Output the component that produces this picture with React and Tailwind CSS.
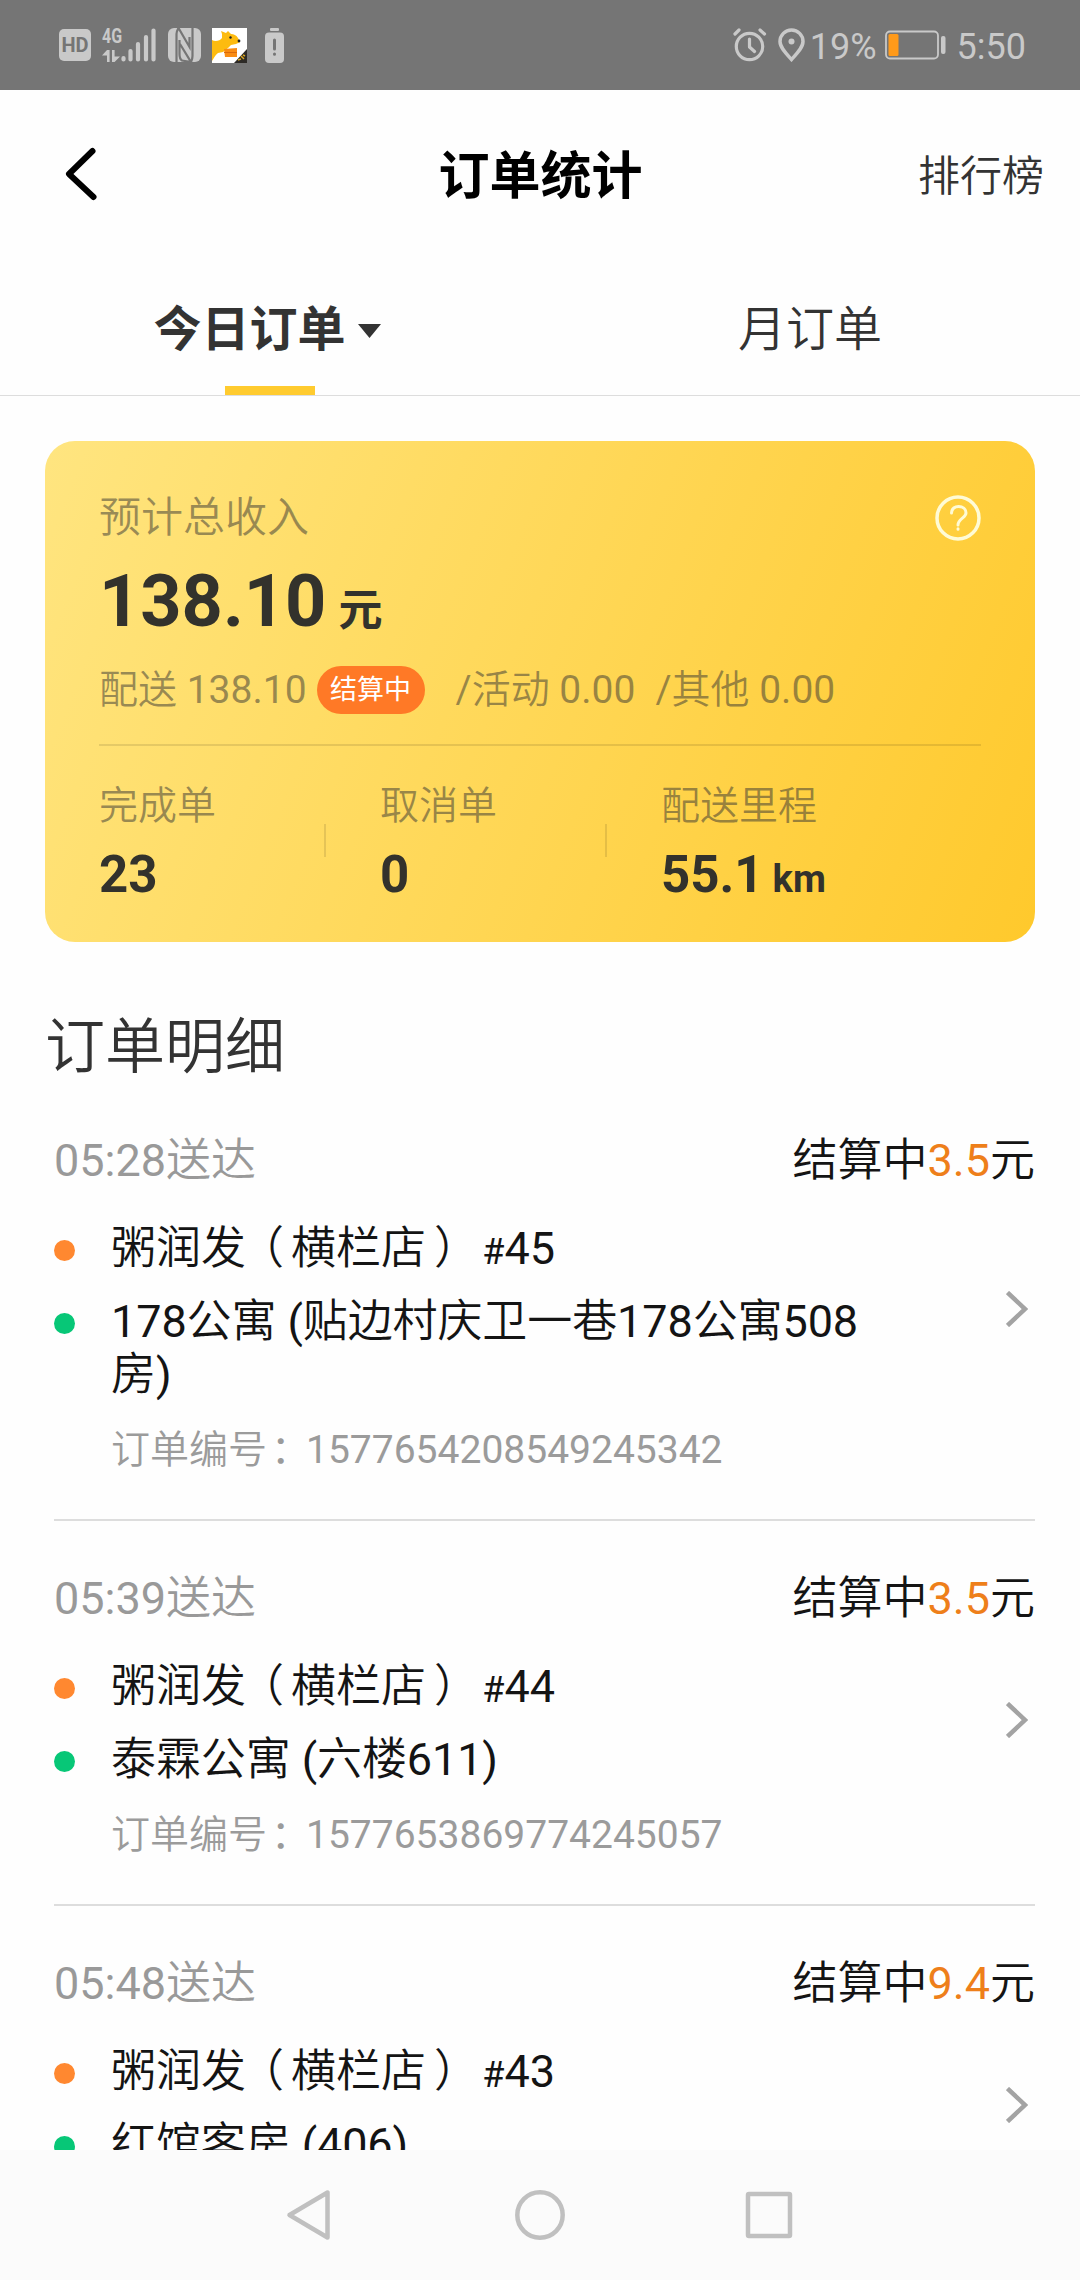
const orders = [
  {
    id: '1577654208549245342',
    time: '05:28',
    fee: '3.5',
    shop: '粥润发',
    branch: '横栏店',
    seq: 45,
    address: '178公寓 (贴边村庆卫一巷178公寓508房)',
  },
  {
    id: '1577653869774245057',
    time: '05:39',
    fee: '3.5',
    shop: '粥润发',
    branch: '横栏店',
    seq: 44,
    address: '泰霖公寓 (六楼611)',
  },
  {
    time: '05:48',
    fee: '9.4',
    shop: '粥润发',
    branch: '横栏店',
    seq: 43,
    address: '红馆客房 (406)',
  },
];

const stats = [
  { label: '完成单', value: '23' },
  { label: '取消单', value: '0' },
  { label: '配送里程', value: '55.1', unit: 'km' },
];

// Chinese runs are set a little lighter than the digits next to them
const Zh = ({ children }) =>
  children.split(/([\u4e00-\u9fff]+)/).map((part, index) =>
    index % 2 ? (
      <span key={index} className="font-[350]">
        {part}
      </span>
    ) : (
      part
    )
  );

const StatusBar = () => (
  <div className="flex h-[90px] shrink-0 items-center justify-between bg-[#757575] pr-[54px] pl-[59px] text-[#c9c9c9]">
    <div className="flex items-center">
      {/* HD */}
      <div className="flex h-8 w-8 items-center justify-center rounded-[5px] bg-[#c9c9c9] text-[20px] leading-none font-bold text-[#757575]">
        HD
      </div>
      {/* 4G + signal */}
      <div className="ml-[11px] flex h-[34px] w-[54px] items-end">
        <div className="flex h-full w-[19px] flex-col justify-between">
          <span className="origin-left scale-x-[0.8] text-[20px] leading-[16px] font-bold">4G</span>
          <svg className="h-[12px] w-[18px]" viewBox="0 0 18 12" fill="currentColor">
            <path d="M5 0h2.600v12H5V5.500H0zM10 0h2.600v6.500H18L12.600 12H10z" />
          </svg>
        </div>
        <svg className="h-[34px] w-[35px]" viewBox="0 0 35 34" stroke="currentColor" strokeWidth="4.200" strokeLinecap="round">
          <path d="M2.500 30v1.500M9.500 23v8.500M17 16v15.500M25 9v22.500M32.500 2.500v29" />
        </svg>
      </div>
      {/* NFC */}
      <svg className="ml-3 h-[34px] w-[33px]" viewBox="0 0 33 34">
        <rect width="33" height="34" rx="6" fill="#c9c9c9" />
        <path d="M8.500 34V6c0-2.500 1-4 2-6l11 19V9M11.500 12v14c0 4 1 5.500 2.500 6.500l9 1.500-11-18M24.500 0v28c0 2.500-.5 4-1.500 6" fill="none" stroke="#757575" strokeWidth="2.200" />
      </svg>
      {/* courier app */}
      <svg className="ml-[11px] h-[35px] w-[35px]" viewBox="0 0 35 35">
        <rect width="35" height="35" fill="#fff" />
        <path d="M0 12c3 2 8 1 10-2V6l-1-3 5 2 2-2 3 3c3 0 5 1 7 4l2 4-4 2-5 1-3 3-5 4-5 1c-3 2-4 5-6 8z" fill="#fdbb0f" />
        <path d="M12 21l13-1v9H13z" fill="#f98b12" />
        <path d="M12 24.500h13" stroke="#d9690a" />
        <circle cx="18.500" cy="9.500" r="1.200" fill="#222" />
        <circle cx="27" cy="13" r="1.400" fill="#222" />
        <path d="M35 21v14H22z" fill="#2d2a26" />
        <path d="M26 32l3-1M29 28l3 3M31 27l2 1" stroke="#d9a520" strokeWidth="1.500" />
      </svg>
      {/* low battery */}
      <svg className="ml-[18px] h-[35px] w-[19px]" viewBox="0 0 19 35">
        <rect x="5" y="0" width="9" height="3" rx="1" fill="#c9c9c9" />
        <rect y="4.500" width="19" height="30.500" rx="4" fill="#c9c9c9" />
        <path d="M9.500 12v9M9.500 26v.2" stroke="#757575" strokeWidth="3" strokeLinecap="round" />
      </svg>
    </div>

    <div className="flex items-center">
      <svg className="h-[34px] w-[34px]" viewBox="0 0 34 34" fill="none" stroke="currentColor" strokeWidth="3.200" strokeLinecap="round" strokeLinejoin="round">
        <circle cx="16.500" cy="18.500" r="13.200" />
        <path d="M16.500 11v8l5 4.500M2 6l4-4M27 2l4.500 4" />
      </svg>
      <svg className="ml-[11px] h-[34px] w-[27px]" viewBox="0 0 27 34" fill="none" stroke="currentColor" strokeWidth="3.500">
        <path d="M13.500 31.500C8 25.500 2 19.500 2 13.500a11.500 11.500 0 0 1 23 0c0 6-6 12-11.500 18z" />
        <circle cx="13.500" cy="13.500" r="3" fill="currentColor" stroke="none" />
      </svg>
      <span className="mt-[3px] ml-[5px] text-[36px] leading-none">19%</span>
      <svg className="ml-[8px] h-[30px] w-[61px]" viewBox="0 0 61 30">
        <rect x="1" y="1.500" width="52" height="27" rx="4" fill="none" stroke="#c9c9c9" strokeWidth="1.800" />
        <rect x="3.500" y="4" width="10" height="22" rx="1.500" fill="#ff9a1a" />
        <rect x="56" y="6" width="4.500" height="18" rx="2" fill="#c9c9c9" />
      </svg>
      <span className="mt-[3px] ml-[11px] text-[36px] leading-none">5:50</span>
    </div>
  </div>
);

const Header = () => (
  <div className="flex h-[170px] shrink-0 items-center justify-between pr-[36px] pl-[60px]">
    <svg className="mb-[3px] h-[56px] w-[40px]" viewBox="0 0 40 56" fill="none" stroke="#000" strokeWidth="6" strokeLinecap="round" strokeLinejoin="round">
      <path d="M32.500 5L9 28l24.500 23" />
    </svg>
    <h1 className="mt-[5px] ml-[63px] text-[51px] font-bold text-black">订单统计</h1>
    <span className="mt-[2px] text-[42px] font-[350] text-[#333]">排行榜</span>
  </div>
);

const Tabs = () => (
  <div className="flex h-[136px] shrink-0 border-b border-[#ddd] text-[48px] text-[#333]">
    <div className="flex w-1/2 flex-col items-center justify-between">
      <div className="flex h-[126px] items-center pt-[14px] pr-[6px] font-bold">
        今日订单
        <svg className="mt-[2px] ml-[12px] h-[14px] w-[23px]" viewBox="0 0 23 14">
          <path d="M0 0h23L11.500 14z" fill="#333" />
        </svg>
      </div>
      <div className="h-[9px] w-[90px] shrink-0 bg-[#ffcb2f]" />
    </div>
    <div className="flex w-1/2 items-center justify-center pt-[4px] font-[350]">月订单</div>
  </div>
);

const IncomeCard = () => (
  <div className="mx-[45px] mt-[45px] h-[501px] shrink-0 rounded-[30px] bg-linear-[112deg,#ffe580,#ffc92c] px-[54px]">
    <div className="flex items-start justify-between pt-[54px]">
      <span className="mt-[2px] text-[42px] leading-[42px] font-[350] text-[#333]/50">预计总收入</span>
      <svg className="-mb-1 h-[46px] w-[46px]" viewBox="0 0 46 46" fill="none" stroke="#fffbd5" strokeLinecap="round">
        <circle cx="23" cy="23" r="21" strokeWidth="3.500" />
        <path d="M16.500 18c0-9 14.500-8.500 14.500 0 0 5-8 5.500-8 12M23 33.800v.4" strokeWidth="3" />
      </svg>
    </div>
    <div className="mt-[21px] text-[72px] leading-[84px] font-bold text-[#33322c]">
      138.10<span className="ml-[12px] text-[44px] leading-none">元</span>
    </div>
    <div className="mt-[22px] flex h-[48px] items-center text-[39px] leading-[46px] text-[#333]/50">
      <span>
        <Zh>配送 138.10</Zh>
      </span>
      <span className="ml-[10px] flex h-[48px] w-[108px] items-center justify-center rounded-full bg-[#ff7926] text-[27px] text-white">
        结算中
      </span>
      <span className="ml-[31px]">
        <Zh>/活动 0.00</Zh>
      </span>
      <span className="ml-[20px]">
        <Zh>/其他 0.00</Zh>
      </span>
    </div>
    <div className="mt-[30px] h-[2px] bg-black/10" />
    <div className="flex pt-[37px]">
      {stats.map((stat, index) => (
        <div key={stat.label} className="flex w-[281px] items-center">
          <div className="flex-1">
            <div className="text-[39px] leading-[46px] font-[350] text-[#333]/50">{stat.label}</div>
            <div className="mt-[16px] text-[51px] leading-[60px] font-bold whitespace-nowrap text-[#33322c]">
              {stat.value}
              {stat.unit && <span className="ml-[9px] text-[38px] leading-none">{stat.unit}</span>}
            </div>
          </div>
          {index < stats.length - 1 && <div className="mr-[54px] mb-[7px] h-[33px] w-[2px] bg-black/10" />}
        </div>
      ))}
    </div>
  </div>
);

const OrderItem = ({ order }) => (
  <li className="shrink-0 border-b-2 border-[#ddd] pt-[51px] pb-[46px] text-[45px] leading-[53px] text-[#141414]">
    <div className="flex justify-between">
      <span className="text-[#999]">
        <Zh>{`${order.time}送达`}</Zh>
      </span>
      <span>
        <Zh>结算中</Zh>
        <span className="text-[#ee7f1a]">{order.fee}</span>
        <Zh>元</Zh>
      </span>
    </div>
    <div className="mt-[35px] flex items-center justify-between">
      <div className="flex flex-col gap-[20px]">
        <div className="flex">
          <i className="mt-[18px] mr-[36px] h-[21px] w-[21px] shrink-0 rounded-full bg-[#ff8830]" />
          <span>
            <span className="font-[350]">
              {order.shop}
              <span className="inline-block -translate-x-[7px]">（</span>
              {order.branch}
              <span className="inline-block translate-x-[8px]">）</span>
            </span>{' '}
            <span className="text-[36px] leading-none">#</span>
            {order.seq}
          </span>
        </div>
        <div className="flex">
          <i className="mt-[18px] mr-[36px] h-[21px] w-[21px] shrink-0 rounded-full bg-[#07c777]" />
          <span className="w-[770px] tracking-[-0.1px]">
            <Zh>{order.address}</Zh>
          </span>
        </div>
      </div>
      <svg className="mr-[7px] mb-[6px] h-[36px] w-[22px]" viewBox="0 0 22 36" fill="none" stroke="#a3a3a3" strokeWidth="4.500">
        <path d="M1.500 1.500L19 18 1.500 34.500" />
      </svg>
    </div>
    {order.id && (
      <div className="mt-[26px] ml-[57px] text-[39px] leading-[46px] text-[#9b9b9b]">
        <Zh>订单编号</Zh>
        <span className="inline-block translate-x-[4px]">：</span>
        {order.id}
      </div>
    )}
  </li>
);

const NavBar = () => (
  <div className="flex h-[130px] shrink-0 items-center justify-center bg-[#fbfbfb]">
    <svg className="h-[54px] w-[510px]" viewBox="0 0 510 54" fill="none" stroke="#c0c0c0" strokeWidth="4.500" strokeLinejoin="round">
      <path d="M42.500 4.500v45L4.500 27z" />
      <circle cx="255" cy="27" r="22.700" />
      <rect x="463" y="6" width="42" height="42" rx="1" />
    </svg>
  </div>
);

const App = () => {
  return (
    <div className="flex h-[2280px] w-[1080px] flex-col overflow-hidden bg-[#fefefe] font-[Roboto,'Noto_Sans_CJK_SC',sans-serif]">
      <StatusBar />
      <Header />
      <Tabs />
      <div className="flex min-h-0 flex-1 flex-col overflow-hidden">
        <IncomeCard />
        <h2 className="mt-[71px] ml-[45px] shrink-0 text-[60px] leading-[70px] font-[350] text-[#333]">订单明细</h2>
        <ul className="mr-[45px] ml-[54px] flex flex-col">
          {orders.map((order) => (
            <OrderItem key={order.seq} order={order} />
          ))}
        </ul>
      </div>
      <NavBar />
    </div>
  );
};

export default App;
